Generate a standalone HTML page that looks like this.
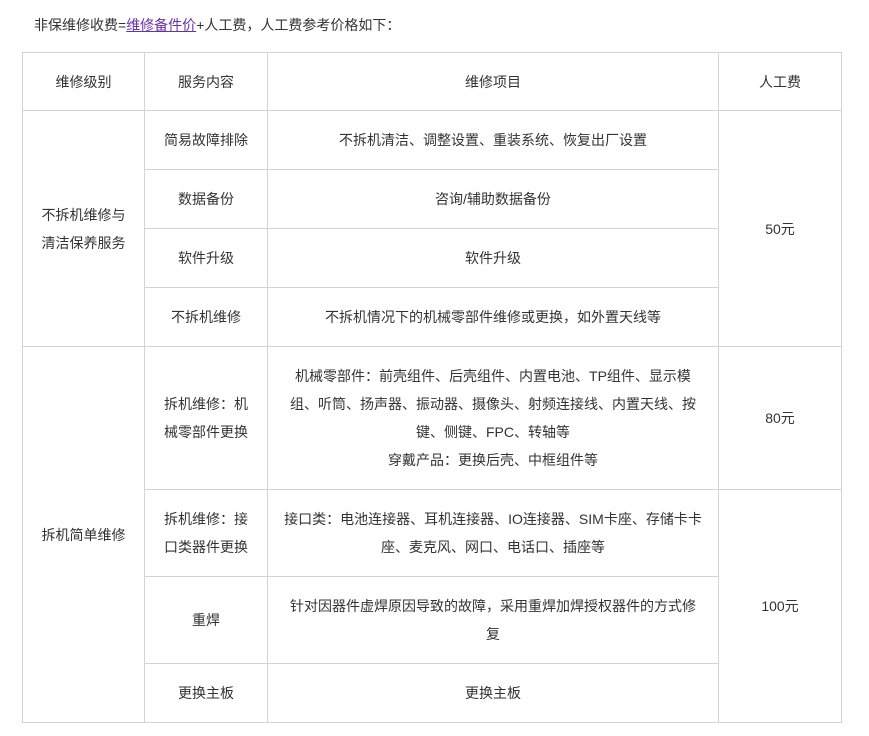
<!DOCTYPE html>
<html><head><meta charset="utf-8"><style>
body{margin:0;background:#fff;font-family:"Liberation Sans","Noto Sans CJK SC",sans-serif;font-size:14px;color:#333;}
p{position:absolute;left:34px;top:14px;margin:0;line-height:22px;}
a{color:#6b2fa8;text-decoration:underline;}
table{position:absolute;left:22px;top:52px;border-collapse:collapse;table-layout:fixed;}
td{border:1px solid #d4d4d4;text-align:center;vertical-align:middle;padding:0 15px;line-height:28px;}
td.w{padding:0 16px;}
</style></head><body>
<p>非保维修收费=<a>维修备件价</a>+人工费，人工费参考价格如下：</p>
<table>
<colgroup><col style="width:122px"><col style="width:123px"><col style="width:451px"><col style="width:123px"></colgroup>
<tr style="height:58px"><td>维修级别</td><td>服务内容</td><td class="w">维修项目</td><td>人工费</td></tr>
<tr style="height:59px"><td rowspan="4">不拆机维修与清洁保养服务</td><td>简易故障排除</td><td class="w">不拆机清洁、调整设置、重装系统、恢复出厂设置</td><td rowspan="4">50元</td></tr>
<tr style="height:59px"><td>数据备份</td><td class="w">咨询/辅助数据备份</td></tr>
<tr style="height:59px"><td>软件升级</td><td class="w">软件升级</td></tr>
<tr style="height:59px"><td>不拆机维修</td><td class="w">不拆机情况下的机械零部件维修或更换，如外置天线等</td></tr>
<tr style="height:143px"><td rowspan="4">拆机简单维修</td><td>拆机维修：机械零部件更换</td><td class="w">机械零部件：前壳组件、后壳组件、内置电池、TP组件、显示模组、听筒、扬声器、振动器、摄像头、射频连接线、内置天线、按键、侧键、FPC、转轴等<br>穿戴产品：更换后壳、中框组件等</td><td>80元</td></tr>
<tr style="height:87px"><td>拆机维修：接口类器件更换</td><td class="w">接口类：电池连接器、耳机连接器、IO连接器、SIM卡座、存储卡卡座、麦克风、网口、电话口、插座等</td><td rowspan="3">100元</td></tr>
<tr style="height:87px"><td>重焊</td><td class="w">针对因器件虚焊原因导致的故障，采用重焊加焊授权器件的方式修复</td></tr>
<tr style="height:59px"><td>更换主板</td><td class="w">更换主板</td></tr>
</table>
</body></html>
